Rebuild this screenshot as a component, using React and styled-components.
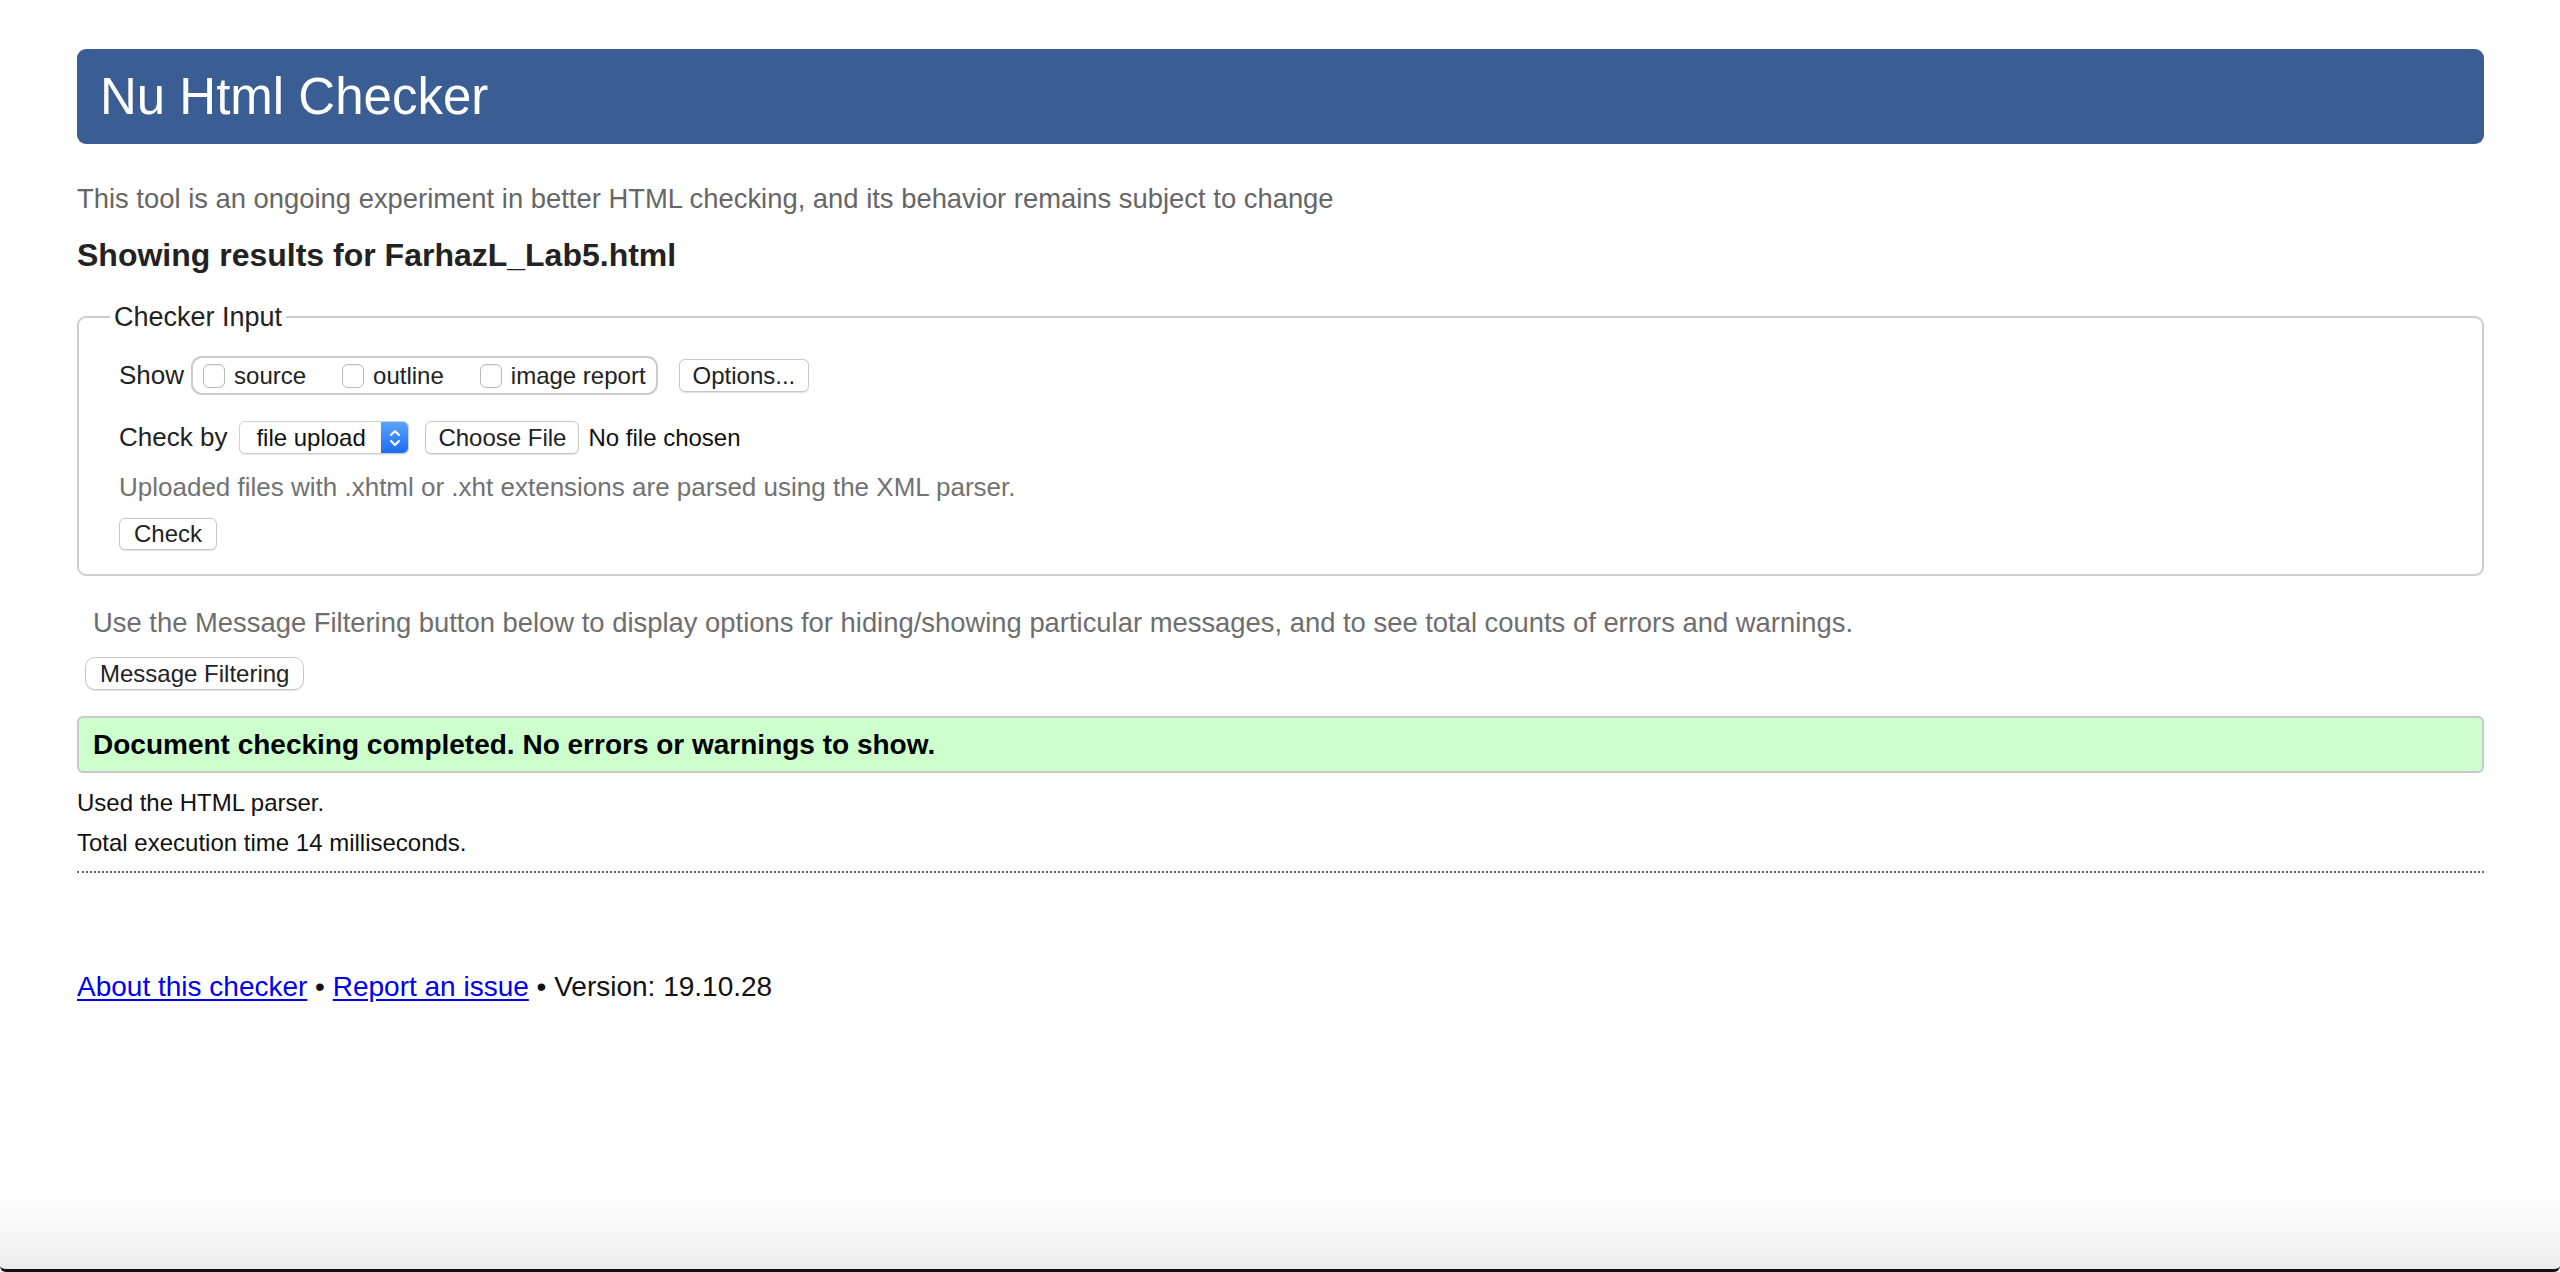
import React from "react";
import styled, { createGlobalStyle } from "styled-components";

const GlobalStyle = createGlobalStyle`
  html, body {
    margin: 0;
    padding: 0;
    background: #fff;
  }
  body {
    font-family: "Liberation Sans", Arial, Helvetica, sans-serif;
    color: #222;
  }
`;

const Page = styled.div`
  min-height: 100vh;
  display: flex;
  flex-direction: column;
  box-sizing: border-box;
`;

const Main = styled.main`
  padding: 49px 76px 0 77px;
`;

const Header = styled.header`
  height: 95px;
  display: flex;
  align-items: center;
  padding-left: 23px;
  background: #3a5e93;
  border-radius: 9px;
`;

const Title = styled.h1`
  margin: 0;
  font-size: 51px;
  font-weight: normal;
  color: #fff;
  line-height: 1;
`;

const Intro = styled.p`
  margin: 40px 0 0;
  font-size: 27.4px;
  line-height: 30px;
  color: #666;
`;

const Heading = styled.h2`
  margin: 23px 0 0;
  font-size: 32px;
  line-height: 36px;
  font-weight: bold;
  color: #222;
`;

const Fieldset = styled.fieldset`
  margin: 28px 0 0;
  padding: 0 40px 24px;
  border: 2px solid #cdcdcd;
  border-radius: 9px;
  min-width: 0;
`;

const Legend = styled.legend`
  margin-left: -9px;
  padding: 0 4px;
  font-size: 27px;
  line-height: 32px;
  color: #222;
`;

const Row = styled.div`
  display: flex;
  align-items: center;
  height: ${(p) => p.$h || 33}px;
  margin-top: ${(p) => p.$mt || 0}px;
`;

const Label = styled.span`
  font-size: 26px;
  color: #222;
  margin-right: ${(p) => p.$mr || 7}px;
`;

const Group = styled.div`
  display: flex;
  align-items: center;
  height: 39px;
  box-sizing: border-box;
  padding: 0 10px 0 10px;
  border: 2px solid #cbcbcb;
  border-radius: 11px;
`;

const CheckItem = styled.label`
  display: flex;
  align-items: center;
  font-size: 24px;
  color: #222;
  margin-right: ${(p) => p.$gap || 0}px;
`;

const Box = styled.input.attrs({ type: "checkbox" })`
  appearance: none;
  width: 22px;
  height: 24px;
  margin: 0 9px 0 0;
  border: 1.5px solid #b9b9b9;
  border-radius: 6px;
  background: #fff;
  box-shadow: inset 0 1px 1px rgba(0, 0, 0, 0.05);
`;

const Button = styled.button`
  height: ${(p) => p.$h || 33}px;
  padding: 0 ${(p) => p.$px || 14}px;
  margin-left: ${(p) => p.$ml || 0}px;
  font-family: "Liberation Sans", Arial, Helvetica, sans-serif;
  font-size: 24px;
  color: #222;
  background: #fff;
  border: 1.5px solid #c9c9c9;
  border-radius: ${(p) => p.$r || 6}px;
  box-shadow: 0 1px 1px rgba(0, 0, 0, 0.12);
`;

const Select = styled.div`
  display: flex;
  align-items: stretch;
  width: 170px;
  height: 33px;
  box-sizing: border-box;
  border: 1.5px solid #cfcfcf;
  border-radius: 6px;
  background: #fff;
  overflow: hidden;
  box-shadow: 0 1px 1px rgba(0, 0, 0, 0.1);
`;

const SelectText = styled.span`
  flex: 1;
  display: flex;
  align-items: center;
  padding-left: 16px;
  font-size: 24px;
  color: #111;
`;

const Stepper = styled.span`
  width: 27px;
  display: flex;
  align-items: center;
  justify-content: center;
  background: linear-gradient(#5aa3ff, #1c6cf4);
`;

const FileName = styled.span`
  margin-left: 9px;
  font-size: 24px;
  color: #111;
`;

const Note = styled.p`
  margin: ${(p) => p.$mt || 0}px 0 0;
  padding-left: ${(p) => p.$pl || 0}px;
  font-size: ${(p) => p.$fs || 26}px;
  line-height: 30px;
  color: ${(p) => p.$color || "#6e6e6e"};
`;

const Success = styled.div`
  margin-top: 26px;
  height: 57px;
  box-sizing: border-box;
  display: flex;
  align-items: center;
  padding-left: 14px;
  background: #ccffcc;
  border: 2px solid #c8c8c8;
  border-radius: 6px;
  font-size: 28px;
  font-weight: bold;
  color: #000;
`;

const Info = styled.p`
  margin: ${(p) => p.$mt || 0}px 0 0;
  font-size: 24px;
  line-height: 40px;
  color: #111;
`;

const Rule = styled.hr`
  margin: 8px 0 0;
  border: 0;
  border-top: 2px dotted #666;
  height: 0;
`;

const Footer = styled.p`
  margin: 98px 0 0;
  font-size: 28px;
  line-height: 32px;
  color: #111;
`;

const Link = styled.a`
  color: #0000ee;
  text-decoration: underline;
  text-underline-offset: 3px;
`;

const Spacer = styled.div`
  flex: 1;
`;

const WindowEdge = styled.div`
  height: 82px;
  background: linear-gradient(#ffffff, #f7f7f7 55%, #ececec);
  border-bottom: 3px solid #111;
  border-radius: 0 0 6px 6px;
`;

function Chevrons() {
  return (
    <svg width="14" height="22" viewBox="0 0 14 22" fill="none">
      <path d="M3 8 L7 4 L11 8" stroke="#fff" strokeWidth="2" strokeLinecap="round" strokeLinejoin="round" />
      <path d="M3 14 L7 18 L11 14" stroke="#fff" strokeWidth="2" strokeLinecap="round" strokeLinejoin="round" />
    </svg>
  );
}

export default function App() {
  return (
    <Page>
      <GlobalStyle />
      <Main>
        <Header>
          <Title>Nu Html Checker</Title>
        </Header>
        <Intro>
          This tool is an ongoing experiment in better HTML checking, and its
          behavior remains subject to change
        </Intro>
        <Heading>Showing results for FarhazL_Lab5.html</Heading>

        <Fieldset>
          <Legend>Checker Input</Legend>
          <Row $h={39} $mt={23}>
            <Label>Show</Label>
            <Group>
              <CheckItem $gap={36}>
                <Box />
                source
              </CheckItem>
              <CheckItem $gap={36}>
                <Box />
                outline
              </CheckItem>
              <CheckItem>
                <Box />
                image report
              </CheckItem>
            </Group>
            <Button $ml={21} $px={13}>Options...</Button>
          </Row>
          <Row $mt={26}>
            <Label $mr={12}>Check by</Label>
            <Select>
              <SelectText>file upload</SelectText>
              <Stepper>
                <Chevrons />
              </Stepper>
            </Select>
            <Button $ml={16} $px={12}>Choose File</Button>
            <FileName>No file chosen</FileName>
          </Row>
          <Note $mt={18} $color="#727272">
            Uploaded files with .xhtml or .xht extensions are parsed using the
            XML parser.
          </Note>
          <Row $h={32} $mt={16}>
            <Button $h={32} $px={14}>Check</Button>
          </Row>
        </Fieldset>

        <Note $mt={32} $pl={16} $fs={27.4}>
          Use the Message Filtering button below to display options for
          hiding/showing particular messages, and to see total counts of errors
          and warnings.
        </Note>
        <Row $mt={19}>
          <Button $ml={8} $px={14} $r={10}>Message Filtering</Button>
        </Row>

        <Success>Document checking completed. No errors or warnings to show.</Success>
        <Info $mt={10}>Used the HTML parser.</Info>
        <Info>Total execution time 14 milliseconds.</Info>
        <Rule />

        <Footer>
          <Link href="#about">About this checker</Link> •{" "}
          <Link href="#report">Report an issue</Link> • Version: 19.10.28
        </Footer>
      </Main>
      <Spacer />
      <WindowEdge />
    </Page>
  );
}
